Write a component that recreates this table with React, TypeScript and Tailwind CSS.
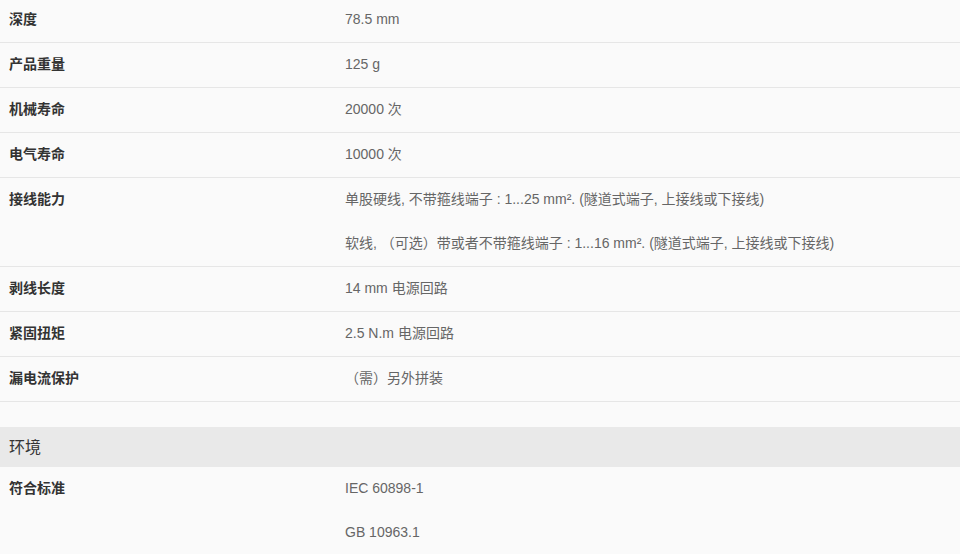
import React from "react";

const font = { fontFamily: '"Liberation Sans", Arial, "Noto Sans CJK SC", sans-serif' };

type Row = { label: string; values: string[] };

const rows1: Row[] = [
  { label: "深度", values: ["78.5 mm"] },
  { label: "产品重量", values: ["125 g"] },
  { label: "机械寿命", values: ["20000 次"] },
  { label: "电气寿命", values: ["10000 次"] },
  {
    label: "接线能力",
    values: [
      "单股硬线, 不带箍线端子 : 1...25 mm². (隧道式端子, 上接线或下接线)",
      "软线, （可选）带或者不带箍线端子 : 1...16 mm². (隧道式端子, 上接线或下接线)",
    ],
  },
  { label: "剥线长度", values: ["14 mm 电源回路"] },
  { label: "紧固扭矩", values: ["2.5 N.m 电源回路"] },
  { label: "漏电流保护", values: ["（需）另外拼装"] },
];

function SpecRow({ row, first }: { row: Row; first?: boolean }) {
  return (
    <div className={`grid grid-cols-[336px_1fr] border-b border-[#e6e6e6] ${first ? "-mt-[2px]" : ""}`}>
      <div className="px-[9px] pt-[11px] pb-[13px] text-[14px] leading-5 font-bold text-[#333]">{row.label}</div>
      <div>
        {row.values.map((v, i) => (
          <div key={i} className="px-[9px] pt-[11px] pb-[13px] text-[14px] leading-5 text-[#666]">
            {v}
          </div>
        ))}
      </div>
    </div>
  );
}

export default function App() {
  return (
    <div className="w-[960px] h-[554px] overflow-hidden bg-[#fafafa]" style={font}>
      {rows1.map((r, i) => (
        <SpecRow key={r.label} row={r} first={i === 0} />
      ))}
      <div className="h-[25px]" />
      <div className="h-[40px] bg-[#e9e9e9] flex items-center px-[9px] pt-[1px] text-[16px] text-[#333]">环境</div>
      <div className="grid grid-cols-[336px_1fr]">
        <div className="px-[9px] pt-[11px] pb-[13px] text-[14px] leading-5 font-bold text-[#333]">符合标准</div>
        <div>
          <div className="px-[9px] pt-[11px] pb-[13px] text-[14px] leading-5 text-[#666]">IEC 60898-1</div>
          <div className="px-[9px] pt-[11px] pb-[13px] text-[14px] leading-5 text-[#666]">GB 10963.1</div>
        </div>
      </div>
    </div>
  );
}
